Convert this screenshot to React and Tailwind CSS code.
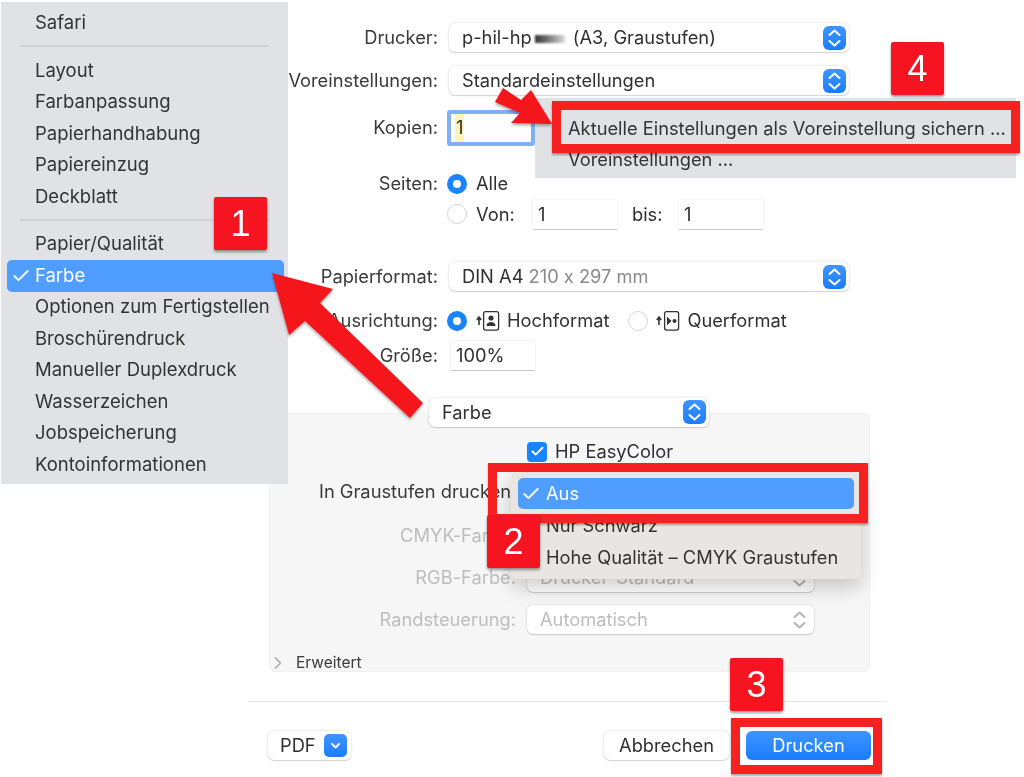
import { Check, ChevronRight } from "lucide-react";

function Stepper({ muted }) {
  return (
    <svg width="23" height="24" viewBox="0 0 23 24" fill="none" strokeWidth="2" strokeLinecap="round" strokeLinejoin="round" stroke={muted ? "#b5b5b5" : "#ffffff"}>
      <path d="M6.5 9 11.5 4.5 16.5 9" />
      <path d="M6.5 15 11.5 19.5 16.5 15" />
    </svg>
  );
}

function Select({ className, children, muted }) {
  return (
    <div className={`flex h-[29px] items-center justify-between rounded-[6px] bg-white pl-[13px] pr-[3px] shadow-[0_0_2px_rgba(0,0,0,0.22),0_1px_1px_rgba(0,0,0,0.12)] ${className}`}>
      <span className={`text-[18.3px] whitespace-nowrap ${muted ? "text-[#bdbdbd]" : "text-[#303030]"}`}>{children}</span>
      {muted ? (
        <Stepper muted />
      ) : (
        <span className="flex h-[24px] w-[23px] items-center justify-center rounded-[6px] bg-gradient-to-b from-[#3d95ff] to-[#1a7cff]">
          <Stepper />
        </span>
      )}
    </div>
  );
}

function Row({ label, className = "", children }) {
  return (
    <div className={`flex items-center ${className}`}>
      <div className="w-[190px] shrink-0 text-right text-[18.3px] whitespace-nowrap text-[#3a3a3a]">{label}</div>
      <div className="ml-[11px] flex items-center">{children}</div>
    </div>
  );
}

function Radio({ on, className = "" }) {
  return on ? (
    <span className={`block h-[20px] w-[20px] shrink-0 rounded-full border-[6px] border-[#1a84ff] bg-white ${className}`} />
  ) : (
    <span className={`block h-[20px] w-[20px] shrink-0 rounded-full border border-[#d5d5d5] bg-white ${className}`} />
  );
}

function Field({ className, children }) {
  return (
    <div className={`flex h-[29px] items-center bg-white px-[5px] text-[18.3px] text-[#303030] shadow-[0_0_1px_rgba(0,0,0,0.25),0_1px_0_rgba(0,0,0,0.18)] ${className}`}>
      {children}
    </div>
  );
}

function Orientation({ landscape }) {
  return (
    <svg width="24" height="22" viewBox="0 0 24 22" fill="none" className="shrink-0">
      <path d="M3 15V8M.8 10 3 7 5.2 10" stroke="#333" strokeWidth="1.6" />
      {landscape ? (
        <>
          <rect x="8.6" y="1.6" width="14" height="18.5" rx="2" stroke="#333" strokeWidth="1.3" />
          <path d="M11 6.5v9l4.5-4.5z" fill="#333" />
          <circle cx="18.5" cy="11" r="2" fill="#333" />
        </>
      ) : (
        <>
          <rect x="7.6" y="1.6" width="15" height="18.5" rx="2" stroke="#333" strokeWidth="1.3" />
          <circle cx="15" cy="8" r="2.6" fill="#333" />
          <path d="M10.5 16c0-3 2-4 4.5-4s4.5 1 4.5 4z" fill="#333" />
        </>
      )}
    </svg>
  );
}

function Badge({ className, children }) {
  return (
    <div className={`absolute flex h-[53px] w-[53px] items-center justify-center rounded-[2px] bg-[#f5141f] font-['Liberation_Sans'] text-[36px] text-white shadow-[0_2px_3px_rgba(0,0,0,0.4)] ${className}`}>
      {children}
    </div>
  );
}

function Frame({ className }) {
  return <div className={`absolute border-[9px] border-[#f62222] shadow-[0_2px_2px_rgba(0,0,0,0.35)] ${className}`} />;
}

const menuGroups = [
  ["Safari"],
  ["Layout", "Farbanpassung", "Papierhandhabung", "Papiereinzug", "Deckblatt"],
  ["Papier/Qualität", "Farbe", "Optionen zum Fertigstellen", "Broschürendruck", "Manueller Duplexdruck", "Wasserzeichen", "Jobspeicherung", "Kontoinformationen"],
];

function SideMenu() {
  return (
    <div className="absolute left-[1px] top-[2px] h-[482px] w-[287px] bg-[#e1e2e5] pt-[5.5px] text-[18.5px] text-[#333]">
      {menuGroups.map((group, i) => (
        <div key={i}>
          {i > 0 && <div className="mx-[19px] mb-[8px] mt-[6px] h-[2px] bg-[#d0d1d4]" />}
          {group.map((item) =>
            item === "Farbe" ? (
              <div key={item} className="ml-[6px] mr-[4px] flex h-[31.5px] items-center rounded-[5px] bg-[#4f9eff] text-white">
                <Check size={20} strokeWidth={2.2} className="ml-[4px] mr-[4px]" />
                {item}
              </div>
            ) : (
              <div key={item} className="flex h-[31.5px] items-center pl-[34px] whitespace-nowrap">
                {item}
              </div>
            )
          )}
        </div>
      ))}
    </div>
  );
}

function ColorPanel() {
  return (
    <div className="relative ml-[21px] mt-[-14px] h-[259px] w-[601px] rounded-[6px] border border-[#f0f0f0] bg-[#f6f6f6] text-[18.3px]">
      <div className="ml-[257px] mt-[27px] flex h-[22px] items-center gap-[8px] text-[#303030]">
        <span className="flex h-[20px] w-[20px] items-center justify-center rounded-[4px] bg-[#1a84ff]">
          <Check size={15} strokeWidth={3} color="#fff" />
        </span>
        HP EasyColor
      </div>
      <div className="ml-[49px] mt-[15px] whitespace-nowrap text-[#3a3a3a]">In Graustufen drucken</div>
      <div className="mt-[16px] flex flex-col gap-[13px]">
        {[
          ["CMYK-Farbe:", "Drucker-Standard"],
          ["RGB-Farbe:", "Drucker-Standard"],
          ["Randsteuerung:", "Automatisch"],
        ].map(([label, value]) => (
          <div key={label} className="flex items-center">
            <div className="w-[246px] text-right whitespace-nowrap text-[#bdbdbd]">{label}</div>
            <Select muted className="ml-[11px] w-[287px] bg-[#fbfbfb] pl-[12px] shadow-[0_0_2px_rgba(0,0,0,0.12)]">{value}</Select>
          </div>
        ))}
      </div>
      <div className="absolute bottom-[-2px] left-[-2px] flex h-[20px] items-center text-[15.5px] text-[#3a3a3a]">
        <ChevronRight size={20} color="#aaa" />
        <span className="ml-[8px]">Erweitert</span>
      </div>
    </div>
  );
}

function Dialog() {
  return (
    <div className="ml-[248px] w-[638px] pt-[23px]">
      <Row label="Drucker:">
        <Select className="w-[400px]">
          p-hil-hp<span className="mx-[3px] inline-block h-[8px] w-[30px] translate-y-[-1px] bg-gradient-to-r from-[#333] to-[#ddd] blur-[1px]" /> (A3, Graustufen)
        </Select>
      </Row>
      <Row label="Voreinstellungen:" className="mt-[14px]">
        <Select className="w-[400px]">Standardeinstellungen</Select>
      </Row>
      <Row label="Kopien:" className="mt-[15px]">
        <div className="ml-[-2px] flex h-[36px] w-[88px] items-center rounded-[3px] border-[4px] border-[#7fb0f5] bg-white pl-[4px] text-[18.3px] text-[#303030]">
          <span className="bg-[#fdf5b8] px-[1px]">1</span>
        </div>
      </Row>
      <Row label="Seiten:" className="mt-[24px]">
        <Radio on className="ml-[-2px]" />
        <span className="ml-[9px] text-[18.3px] text-[#303030]">Alle</span>
      </Row>
      <div className="ml-[199px] mt-[6px] flex h-[22px] items-center text-[18.3px] text-[#303030]">
        <Radio />
        <span className="ml-[9px] w-[57px]">Von:</span>
        <Field className="w-[84px]">1</Field>
        <span className="ml-[15px] w-[47px]">bis:</span>
        <Field className="w-[84px]">1</Field>
      </div>
      <Row label="Papierformat:" className="mt-[37px]">
        <Select className="w-[400px]">
          DIN A4 <span className="text-[#8a8a8a]">210 x 297 mm</span>
        </Select>
      </Row>
      <Row label="Ausrichtung:" className="mt-[16px]">
        <Radio on className="ml-[-2px]" />
        <span className="ml-[9px] flex">
          <Orientation />
        </span>
        <span className="ml-[7px] text-[18.3px] text-[#303030]">Hochformat</span>
        <Radio className="ml-[19px]" />
        <span className="ml-[8px] flex">
          <Orientation landscape />
        </span>
        <span className="ml-[7px] text-[18.3px] text-[#303030]">Querformat</span>
      </Row>
      <Row label="Größe:" className="mt-[6px]">
        <Field className="ml-[2px] w-[84px]">100%</Field>
      </Row>
      <div className="relative z-10 ml-[181px] mt-[28px] w-[280px]">
        <Select className="w-[280px]">Farbe</Select>
      </div>
      <ColorPanel />
      <div className="mt-[29px] h-[1px] bg-[#e4e4e4]" />
      <div className="mt-[29px] flex items-center pl-[20px] pr-[15px] text-[18.3px] text-[#303030]">
        <div className="flex h-[29px] w-[83px] items-center justify-between rounded-[6px] bg-white pl-[12px] pr-[4px] shadow-[0_0_2px_rgba(0,0,0,0.22),0_1px_1px_rgba(0,0,0,0.12)]">
          PDF
          <span className="flex h-[23px] w-[23px] items-center justify-center rounded-[5px] bg-gradient-to-b from-[#3d95ff] to-[#1a7cff]">
            <svg width="13" height="13" viewBox="0 0 13 13" fill="none" stroke="#fff" strokeWidth="2" strokeLinecap="round" strokeLinejoin="round"><path d="M3 5l3.5 3.5L10 5" /></svg>
          </span>
        </div>
        <div className="ml-auto flex h-[29px] w-[125px] items-center justify-center rounded-[6px] bg-white shadow-[0_0_2px_rgba(0,0,0,0.22),0_1px_1px_rgba(0,0,0,0.12)]">
          Abbrechen
        </div>
        <div className="ml-[17px] flex h-[29px] w-[125px] items-center justify-center rounded-[6px] bg-gradient-to-b from-[#3d95ff] to-[#1a7cff] text-white">
          Drucken
        </div>
      </div>
    </div>
  );
}

export default function App() {
  return (
    <div className="relative h-[777px] w-[1024px] overflow-hidden bg-white font-['Inter','Liberation_Sans',sans-serif] blur-[0.3px] [font-feature-settings:'calt'_0]">
      <Dialog />
      <SideMenu />

      {/* Popup from Voreinstellungen */}
      <div className="absolute left-[535px] top-[98px] h-[80px] w-[481px] bg-[#e1e2e5] pl-[33px] pt-[15px] text-[18.3px] text-[#333]">
        <div className="flex h-[31px] items-center whitespace-nowrap">Aktuelle Einstellungen als Voreinstellung sichern ...</div>
        <div className="flex h-[32px] items-center whitespace-nowrap">Voreinstellungen ...</div>
      </div>

      {/* Popup from In Graustufen drucken */}
      <div className="absolute left-[511px] top-[472px] h-[107px] w-[350px] rounded-[6px] bg-[#e9e5e2] px-[7px] pt-[6px] text-[18.3px] text-[#333] shadow-[0_8px_20px_rgba(0,0,0,0.2)]">
        <div className="flex h-[31px] items-center rounded-[5px] bg-[#4f9eff] text-white">
          <Check size={20} strokeWidth={2.2} className="ml-[3px] mr-[5px]" />
          Aus
        </div>
        <div className="mt-[1px] flex h-[32px] items-center pl-[28px]">Nur Schwarz</div>
        <div className="flex h-[31px] items-center pl-[28px] whitespace-nowrap">Hohe Qualität – CMYK Graustufen</div>
      </div>

      {/* Annotations */}
      <svg className="absolute inset-0" width="1024" height="777" viewBox="0 0 1024 777">
        <defs>
          <filter id="arrowShadow" x="-10%" y="-10%" width="120%" height="120%">
            <feDropShadow dx="0" dy="2" stdDeviation="1.5" floodColor="#000" floodOpacity="0.35" />
          </filter>
        </defs>
        <polygon filter="url(#arrowShadow)" fill="#f5141f" points="272,273 333,289 320,303 423,403 410,418 305,321 289,335" />
        <polygon filter="url(#arrowShadow)" fill="#f5141f" points="503,88 521,100 531,90 552,124 511,123 520,113 495,102" />
      </svg>
      <Frame className="left-[552px] top-[101px] h-[52px] w-[468px]" />
      <Frame className="left-[488px] top-[463px] h-[60px] w-[380px]" />
      <Frame className="left-[731px] top-[718px] h-[56px] w-[151px]" />
      <Badge className="left-[214px] top-[197px]">1</Badge>
      <Badge className="left-[487px] top-[515px]">2</Badge>
      <Badge className="left-[730px] top-[658px]">3</Badge>
      <Badge className="left-[891px] top-[42px]">4</Badge>
    </div>
  );
}
